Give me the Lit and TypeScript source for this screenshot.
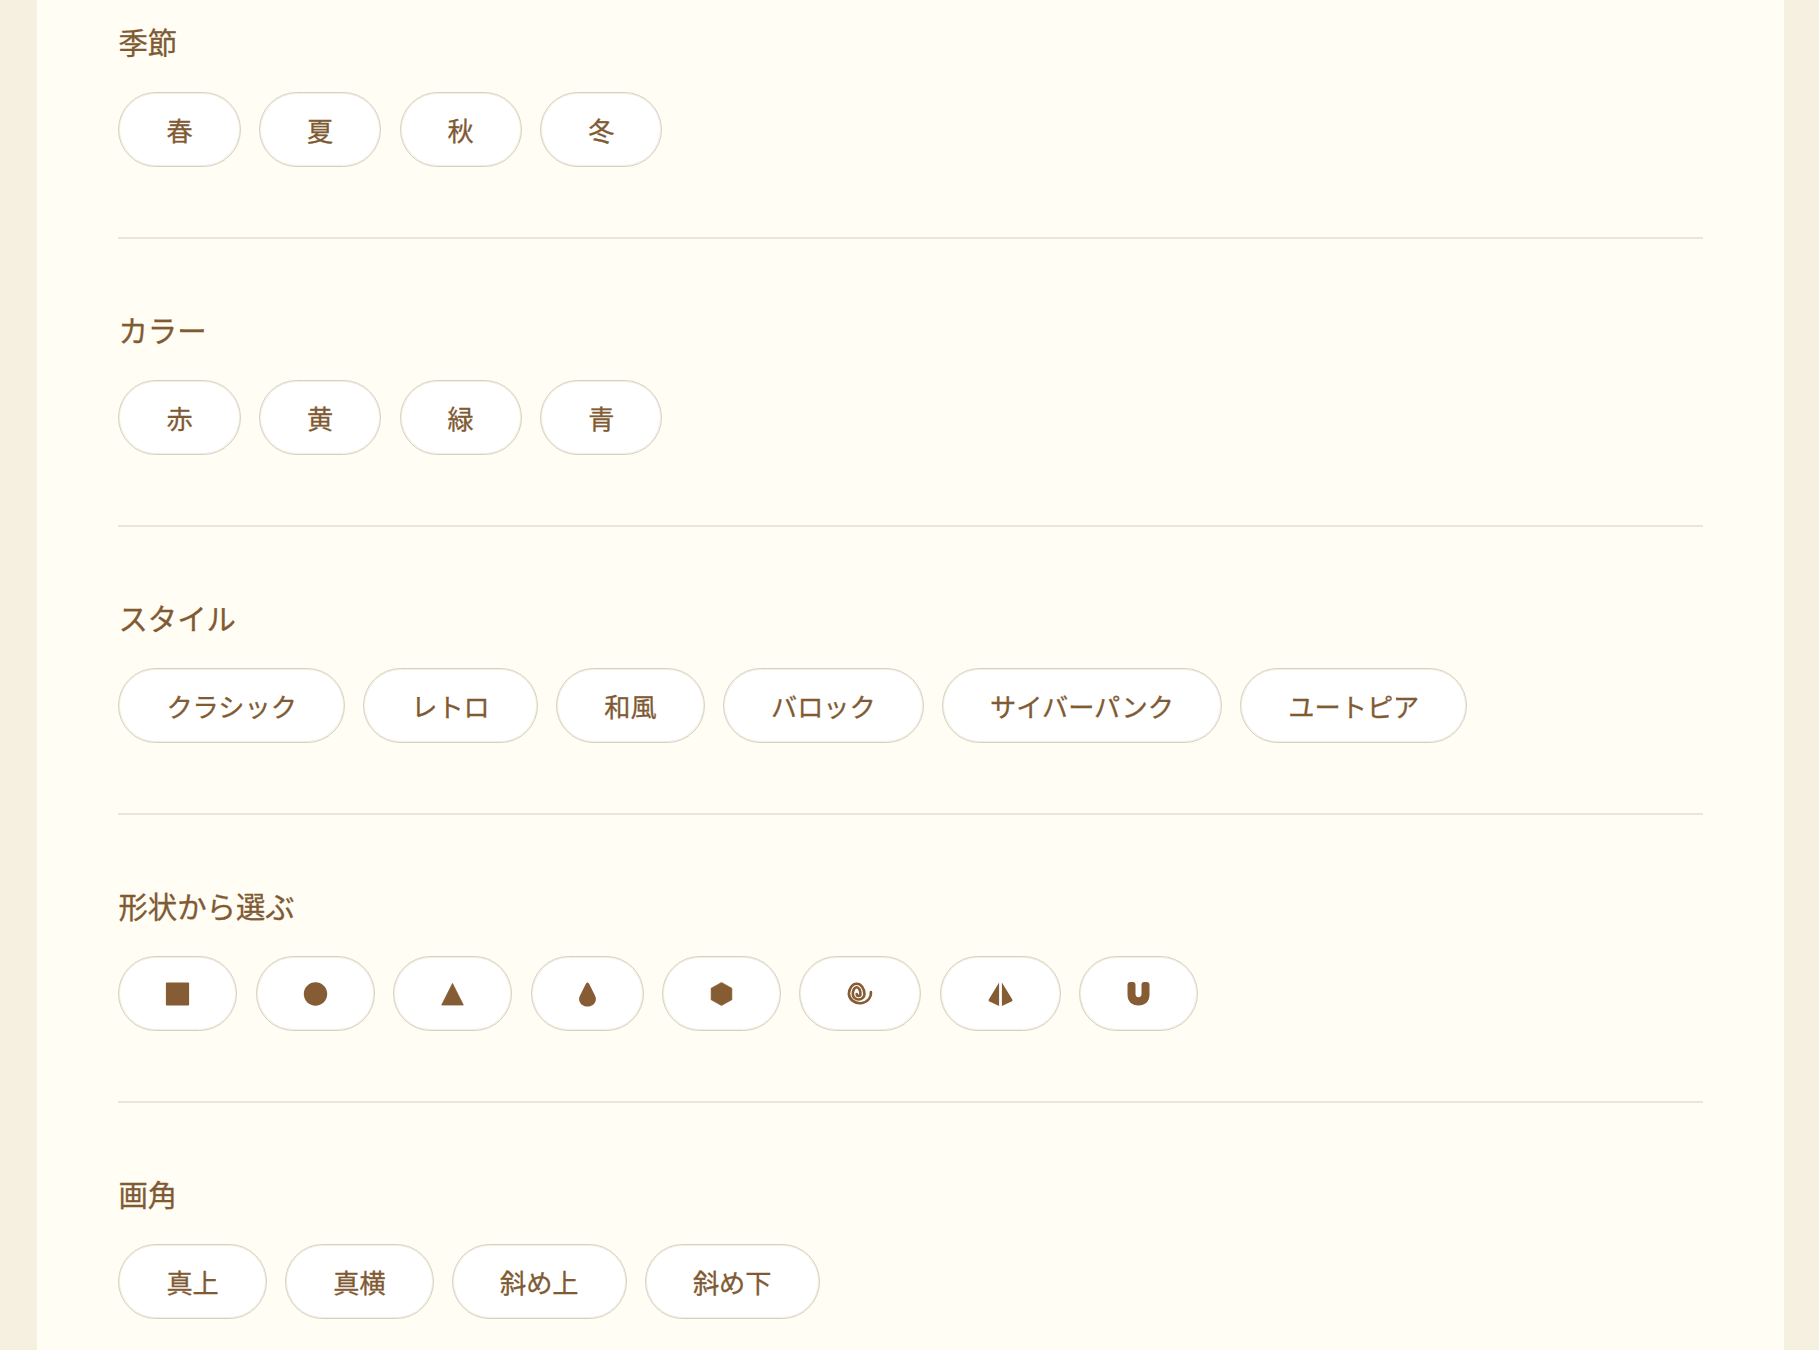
import { LitElement, css, html, svg } from 'lit';
import { customElement } from 'lit/decorators.js';

const groups = [
  { title: '季節', items: ['春', '夏', '秋', '冬'] },
  { title: 'カラー', items: ['赤', '黄', '緑', '青'] },
  { title: 'スタイル', items: ['クラシック', 'レトロ', '和風', 'バロック', 'サイバーパンク', 'ユートピア'] },
  { title: '形状から選ぶ', shapes: true },
  { title: '画角', items: ['真上', '真横', '斜め上', '斜め下'] },
];

// w: width the glyph is drawn for, slot: width it takes in the chip
const shapes = [
  { w: 22, slot: 23, label: '四角', d: svg`<rect x="-0.6" y="0.4" width="23.2" height="23.2" rx="1"/>` },
  { w: 22, slot: 23, label: '丸', d: svg`<circle cx="11" cy="12" r="11.7"/>` },
  { w: 22, slot: 23, label: '三角', d: svg`<path d="M11 1.4 L21.8 23 L0.2 23 Z" stroke="currentColor" stroke-width="0.8" stroke-linejoin="round"/>` },
  { w: 16, slot: 17, label: 'しずく', d: svg`<path d="M8 0.4 C9 0.4 9.5 1.4 10 2.4 L15.2 13 C16.2 15 16.4 16 16.4 17 C16.4 21.4 12.6 24.6 8 24.6 C3.4 24.6 -0.4 21.4 -0.4 17 C-0.4 16 -0.2 15 0.8 13 L6 2.4 C6.5 1.4 7 0.4 8 0.4 Z"/>` },
  { w: 22, slot: 23, label: '六角形', d: svg`<path d="M11 0.4 L21.4 6.2 L21.4 17.8 L11 23.6 L0.6 17.8 L0.6 6.2 Z" stroke="currentColor" stroke-width="0.6" stroke-linejoin="round"/>` },
  { w: 25, slot: 26, label: 'うずまき', d: svg`<path d="M23.4 10 A11.05 10.2 0 0 1 1.35 12 A7.83 10.65 0 0 1 17 12 A5.85 5.5 0 0 1 5.3 12 A3.85 6.7 0 0 1 13 12 A1.9 1.9 0 0 1 9.2 12" fill="none" stroke="currentColor" stroke-width="2.6" stroke-linecap="round"/>` },
  { w: 24, slot: 25, label: '折り紙', d: svg`<path d="M10.6 0.4 L10.6 24 L1 19.6 C0 19.2 0 18.4 0.3 17.6 Z"/><path d="M13.4 0.4 L13.4 24 L23 19.6 C24 19.2 24.2 18.4 23.8 17.6 Z"/>` },
  { w: 22, slot: 23, label: 'U字', d: svg`<path d="M0 3 C0 1 1 0 3 0 L5.4 0 C7 0 8 1 8 3 L8 12 C8 14 9 15.2 11 15.2 C13 15.2 14 14 14 12 L14 3 C14 1 15 0 16.6 0 L19 0 C21 0 22 1 22 3 L22 12.6 C22 19.6 17.6 23.6 11 23.6 C4.4 23.6 0 19.6 0 12.6 Z"/>` },
];

@customElement('app-root')
export class AppRoot extends LitElement {
  static styles = css`
    :host {
      display: block;
      background: #f5f0df;
      font-family: 'Noto Sans CJK JP', 'Liberation Sans', sans-serif;
      color: #7f5a33;
    }
    .panel {
      box-sizing: border-box;
      height: 1350px;
      margin: 0 35px 0 37px;
      padding: 22px 81px 0 81.4px;
      background: #fffdf4;
      overflow: hidden;
    }
    .group {
      padding-bottom: 70px;
      margin-bottom: 71px;
      border-bottom: 2px solid #ebe6d8;
    }
    .group:last-child {
      border-bottom: none;
    }
    h2 {
      margin: 0 0 32px;
      font-size: 29.4px;
      line-height: 38px;
      font-weight: 400;
      -webkit-text-stroke: 0.3px currentColor;
    }
    .chips {
      display: flex;
      gap: 18.3px;
    }
    .chip {
      display: flex;
      align-items: center;
      justify-content: center;
      height: 75px;
      padding: 0 47.05px;
      box-sizing: border-box;
      background: #fff;
      border: 1px solid #d6d0c0;
      box-shadow: inset 0 0 0 1px #f2efe3;
      border-radius: 38px;
      color: inherit;
      font: inherit;
      font-size: 26.2px;
      font-weight: 400;
      -webkit-text-stroke: 0.3px currentColor;
    }
    svg {
      display: block;
      overflow: visible;
      fill: #855c33;
      color: #855c33;
    }
  `;

  renderShape(s: (typeof shapes)[number]) {
    const x = (s.w - s.slot) / 2;
    return html`<button class="chip" aria-label=${s.label}>
      <svg width=${s.slot} height="24" viewBox="${x} 0 ${s.slot} 24">${s.d}</svg>
    </button>`;
  }

  render() {
    return html`<main class="panel">
      ${groups.map(
        (g) => html`<section class="group">
          <h2>${g.title}</h2>
          <div class="chips">
            ${g.shapes
              ? shapes.map((s) => this.renderShape(s))
              : g.items!.map((t) => html`<button class="chip">${t}</button>`)}
          </div>
        </section>`,
      )}
    </main>`;
  }
}
